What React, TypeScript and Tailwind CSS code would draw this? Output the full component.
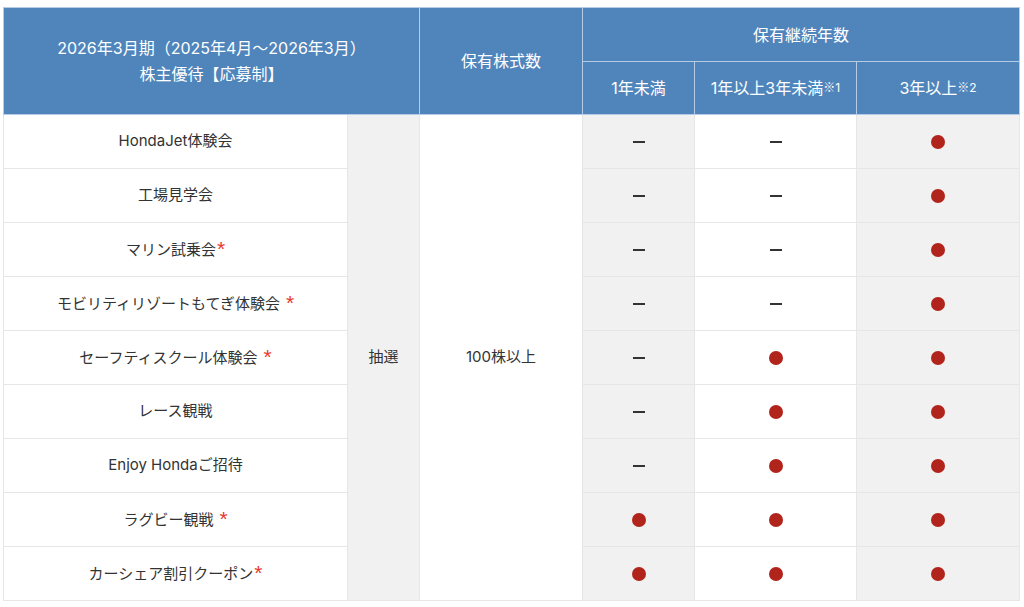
import React from 'react';

type Mark = 'dot' | 'dash';

const rows: { name: string; star?: 'tight' | 'space'; marks: [Mark, Mark, Mark] }[] = [
  { name: 'HondaJet体験会', marks: ['dash', 'dash', 'dot'] },
  { name: '工場見学会', marks: ['dash', 'dash', 'dot'] },
  { name: 'マリン試乗会', star: 'tight', marks: ['dash', 'dash', 'dot'] },
  { name: 'モビリティリゾートもてぎ体験会', star: 'space', marks: ['dash', 'dash', 'dot'] },
  { name: 'セーフティスクール体験会', star: 'space', marks: ['dash', 'dot', 'dot'] },
  { name: 'レース観戦', marks: ['dash', 'dot', 'dot'] },
  { name: 'Enjoy Hondaご招待', marks: ['dash', 'dot', 'dot'] },
  { name: 'ラグビー観戦', star: 'space', marks: ['dot', 'dot', 'dot'] },
  { name: 'カーシェア割引クーポン', star: 'tight', marks: ['dot', 'dot', 'dot'] },
];

function Cell({ mark }: { mark: Mark }) {
  if (mark === 'dot') {
    return <span className="inline-block w-[14px] h-[14px] rounded-full bg-[#b0241b] align-middle" />;
  }
  return <span className="inline-block w-[12px] h-[2px] bg-[#333] align-middle" />;
}

function Note({ n }: { n: string }) {
  return (
    <sup className="text-[12px] relative -top-[2px]">
      <span className="font-['Noto_Sans_CJK_JP']">※</span>
      {n}
    </sup>
  );
}

export default function App() {
  const th = 'border border-[#b5cce6] bg-[#5085bc] text-white font-normal text-[16px] text-center align-middle';
  const td = 'border border-[#e6e6e6] text-center align-middle text-[15px] text-[#333]';

  return (
    <div
      className="bg-white w-[1024px] h-[607px] pt-[7px] pl-[3px]"
      style={{ fontFamily: 'Inter, "Noto Sans CJK JP", sans-serif' }}
    >
      <table className="table-fixed border-collapse w-[1016px]">
        <colgroup>
          <col className="w-[344px]" />
          <col className="w-[72px]" />
          <col className="w-[163px]" />
          <col className="w-[112px]" />
          <col className="w-[162px]" />
          <col className="w-[163px]" />
        </colgroup>
        <thead>
          <tr className="h-[54px]">
            <th colSpan={2} rowSpan={2} className={`${th} leading-[26px]`}>
              2026年3月期（2025年4月〜2026年3月）
              <br />
              株主優待【応募制】
            </th>
            <th rowSpan={2} className={th}>保有株式数</th>
            <th colSpan={3} className={th}>保有継続年数</th>
          </tr>
          <tr className="h-[53px]">
            <th className={th}>1年未満</th>
            <th className={th}>
              1年以上3年未満<Note n="1" />
            </th>
            <th className={th}>
              3年以上<Note n="2" />
            </th>
          </tr>
        </thead>
        <tbody>
          {rows.map((r, i) => (
            <tr key={r.name} className="h-[54px]">
              <td className={`${td} bg-white`}>
                {r.name}
                {r.star && (
                  <span
                    className={`text-[#e8392c] text-[21px] leading-none relative top-[1px] font-['Liberation_Sans'] ${r.star === 'space' ? 'ml-[6px]' : 'ml-[1px]'}`}
                  >
                    *
                  </span>
                )}
              </td>
              {i === 0 && (
                <>
                  <td rowSpan={9} className={`${td} bg-[#f1f1f1]`}>抽選</td>
                  <td rowSpan={9} className={`${td} bg-white`}>100株以上</td>
                </>
              )}
              <td className={`${td} bg-[#f1f1f1]`}><Cell mark={r.marks[0]} /></td>
              <td className={`${td} bg-white`}><Cell mark={r.marks[1]} /></td>
              <td className={`${td} bg-[#f1f1f1]`}><Cell mark={r.marks[2]} /></td>
            </tr>
          ))}
        </tbody>
      </table>
    </div>
  );
}
